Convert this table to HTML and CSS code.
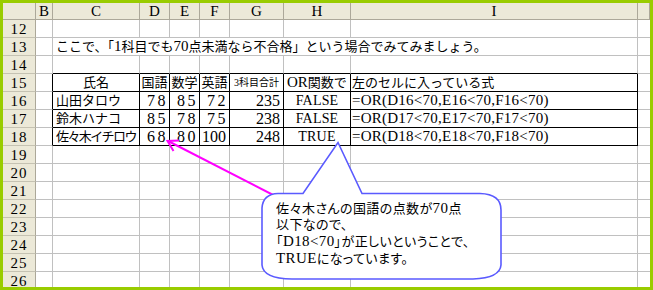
FILE: index.html
```html
<!DOCTYPE html>
<html lang="ja">
<head>
<meta charset="utf-8">
<link rel="stylesheet" href="styles.css">
</head>
<body>
<div class="page">
  <div class="frame">
    <div class="sheet">
      <div class="hd"></div><div class="hd">B</div><div class="hd">C</div><div class="hd">D</div><div class="hd">E</div><div class="hd">F</div><div class="hd">G</div><div class="hd">H</div><div class="hd">I</div><div class="hd"></div>

      <div class="rh">12</div><div class="c"></div><div class="c"></div><div class="c"></div><div class="c"></div><div class="c"></div><div class="c"></div><div class="c"></div><div class="c"></div><div class="c j"></div>

      <div class="rh">13</div><div class="c"></div><div class="c span l">ここで、「<span class="lat">1</span>科目でも<span class="lat">70</span>点未満なら不合格」という場合でみてみましょう。</div><div class="c j"></div>

      <div class="rh">14</div><div class="c"></div><div class="c tt"></div><div class="c tt"></div><div class="c tt"></div><div class="c tt"></div><div class="c tt"></div><div class="c tt"></div><div class="c tt"></div><div class="c j"></div>

      <div class="rh">15</div><div class="c tl"></div><div class="c t ctr">氏名</div><div class="c t ctr">国語</div><div class="c t ctr">数学</div><div class="c t ctr">英語</div><div class="c t ctr small">3科目合計</div><div class="c t h"><span class="lat">OR</span>関数で</div><div class="c t f">左のセルに入っている式</div><div class="c j"></div>

      <div class="rh">16</div><div class="c tl"></div><div class="c t l">山田タロウ</div><div class="c t r w">78</div><div class="c t r w">85</div><div class="c t r w">72</div><div class="c t r">235</div><div class="c t ctr b">FALSE</div><div class="c t f fx">=OR(D16&lt;70,E16&lt;70,F16&lt;70)</div><div class="c j"></div>

      <div class="rh">17</div><div class="c tl"></div><div class="c t l">鈴木ハナコ</div><div class="c t r w">85</div><div class="c t r w">78</div><div class="c t r w">75</div><div class="c t r">238</div><div class="c t ctr b">FALSE</div><div class="c t f fx">=OR(D17&lt;70,E17&lt;70,F17&lt;70)</div><div class="c j"></div>

      <div class="rh">18</div><div class="c tl"></div><div class="c t l tight">佐々木イチロウ</div><div class="c t r w">68</div><div class="c t r w">80</div><div class="c t r">100</div><div class="c t r">248</div><div class="c t ctr b">TRUE</div><div class="c t f fx">=OR(D18&lt;70,E18&lt;70,F18&lt;70)</div><div class="c j"></div>

      <div class="rh">19</div><div class="c"></div><div class="c"></div><div class="c"></div><div class="c"></div><div class="c"></div><div class="c"></div><div class="c"></div><div class="c"></div><div class="c j"></div>
      <div class="rh">20</div><div class="c"></div><div class="c"></div><div class="c"></div><div class="c"></div><div class="c"></div><div class="c"></div><div class="c"></div><div class="c"></div><div class="c j"></div>
      <div class="rh">21</div><div class="c"></div><div class="c"></div><div class="c"></div><div class="c"></div><div class="c"></div><div class="c"></div><div class="c"></div><div class="c"></div><div class="c j"></div>
      <div class="rh">22</div><div class="c"></div><div class="c"></div><div class="c"></div><div class="c"></div><div class="c"></div><div class="c"></div><div class="c"></div><div class="c"></div><div class="c j"></div>
      <div class="rh">23</div><div class="c"></div><div class="c"></div><div class="c"></div><div class="c"></div><div class="c"></div><div class="c"></div><div class="c"></div><div class="c"></div><div class="c j"></div>
      <div class="rh">24</div><div class="c"></div><div class="c"></div><div class="c"></div><div class="c"></div><div class="c"></div><div class="c"></div><div class="c"></div><div class="c"></div><div class="c j"></div>
      <div class="rh">25</div><div class="c"></div><div class="c"></div><div class="c"></div><div class="c"></div><div class="c"></div><div class="c"></div><div class="c"></div><div class="c"></div><div class="c j"></div>
      <div class="rh">26</div><div class="c"></div><div class="c"></div><div class="c"></div><div class="c"></div><div class="c"></div><div class="c"></div><div class="c"></div><div class="c"></div><div class="c j"></div>
    </div>
  </div>

  <svg class="overlay" width="653" height="290" viewBox="0 0 653 290" xmlns="http://www.w3.org/2000/svg">
    <line x1="279" y1="198" x2="168" y2="141" stroke="#ff00ff" stroke-width="2"/>
    <polyline points="179,140.5 167.5,141 173.5,151" fill="none" stroke="#ff00ff" stroke-width="2"/>
    <path d="M 278 193.5 L 303 193.5 L 338 142.5 L 362 193.5 L 480 193.5 Q 501 194 501 210 L 501 265 Q 500 278 473 279 L 292 279 Q 263 278.5 262 265 L 262 208 Q 263 194 278 193.5 Z" fill="#ffffff" stroke="#5a5aff" stroke-width="1.6"/>
  </svg>

  <div class="note">
    <div>佐々木さんの国語の点数が<span class="lat">70</span>点</div>
    <div>以下なので、</div>
    <div>「<span class="lat">D18&lt;70</span>」が正しいということで、</div>
    <div><span class="lat">TRUE</span>になっています。</div>
  </div>
</div>
</body>
</html>
```

FILE: styles.css
```css
html, body {
  margin: 0;
  padding: 0;
  background: #ffffff;
}

.page {
  position: relative;
  width: 653px;
  height: 290px;
  font-family: "Liberation Serif", "Noto Sans CJK JP", serif;
  font-size: 13px;
  color: #000;
}

.frame {
  width: 653px;
  height: 290px;
  box-sizing: border-box;
  border: 3px solid #99cc00;
  overflow: hidden;
  background: #ffffff;
}

.sheet {
  display: grid;
  grid-template-columns: 33px 17px 87px 30px 30px 30px 54px 67px 287px 12px;
  grid-template-rows: 17px;
  grid-auto-rows: 18px;
}

.hd, .rh {
  background: #ece9d8;
  border-right: 1px solid #aca899;
  border-bottom: 1px solid #aca899;
  box-sizing: border-box;
  text-align: center;
  font-size: 15px;
  line-height: 16px;
  overflow: hidden;
}

.rh {
  line-height: 18px;
  letter-spacing: 1px;
  border-bottom-color: #c5c2b2;
}

.c {
  border-right: 1px solid #c0c0c0;
  border-bottom: 1px solid #c0c0c0;
  box-sizing: border-box;
  line-height: 17px;
  white-space: nowrap;
  overflow: hidden;
}

.lat {
  font-size: 15px;
}

.j {
  border-right: none;
}

.span {
  grid-column: span 7;
  overflow: visible;
}

.t {
  border-right-color: #000;
  border-bottom-color: #000;
}

.tl {
  border-right-color: #000;
}

.tt {
  border-bottom-color: #000;
}

.l {
  padding-left: 3px;
}

.r {
  text-align: right;
  font-size: 16px;
  padding-right: 3px;
}

.w {
  letter-spacing: 2.5px;
  padding-right: 1px;
}

.ctr {
  text-align: center;
}

.small {
  font-size: 10px;
}

.h {
  padding-left: 3px;
}

.b {
  font-size: 14px;
  letter-spacing: 0.2px;
}

.f {
  padding-left: 1px;
}

.fx {
  font-size: 15px;
  letter-spacing: 0.25px;
}

.tight {
  letter-spacing: -1.6px;
}

.overlay {
  position: absolute;
  left: 0;
  top: 0;
}

.note {
  position: absolute;
  left: 276px;
  top: 200px;
  line-height: 16px;
  letter-spacing: 0.4px;
  white-space: nowrap;
  font-feature-settings: "palt";
}
```
